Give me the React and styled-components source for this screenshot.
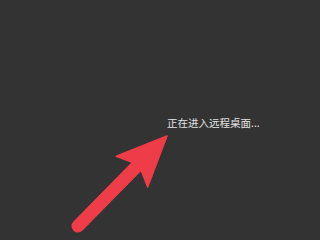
import React from "react";
import styled, { createGlobalStyle } from "styled-components";

const Global = createGlobalStyle`
  html, body { margin: 0; padding: 0; background: #333333; }
  body { font-family: "Noto Sans CJK SC", "Noto Sans", sans-serif; }
`;

const Screen = styled.div`
  position: relative;
  width: 320px;
  height: 240px;
  overflow: hidden;
  background: #333333;
  box-sizing: border-box;
  padding: 115px 0 0 167px;
`;

const Status = styled.div`
  color: #e2e2e2;
  font-family: "Noto Sans CJK SC", "Noto Sans", sans-serif;
  font-size: 10.5px;
  line-height: 16px;
  white-space: nowrap;
  letter-spacing: 0;
`;

const ArrowLayer = styled.svg`
  position: absolute;
  left: 0;
  top: 0;
  width: 320px;
  height: 240px;
  pointer-events: none;
`;

function Arrow({ color }) {
  return (
    <ArrowLayer viewBox="0 0 320 240">
      <line
        x1="78"
        y1="226"
        x2="138"
        y2="165"
        stroke={color}
        strokeWidth="13"
        strokeLinecap="round"
      />
      <polygon
        points="167,136 116.3,156.3 132.3,162.2 138,166 141.5,171.3 147.7,187.1"
        fill={color}
        stroke={color}
        strokeWidth="1.5"
        strokeLinejoin="round"
      />
    </ArrowLayer>
  );
}

export default function App() {
  return (
    <>
      <Global />
      <Screen>
        <Status>正在进入远程桌面...</Status>
        <Arrow color="#ee3d48" />
      </Screen>
    </>
  );
}
